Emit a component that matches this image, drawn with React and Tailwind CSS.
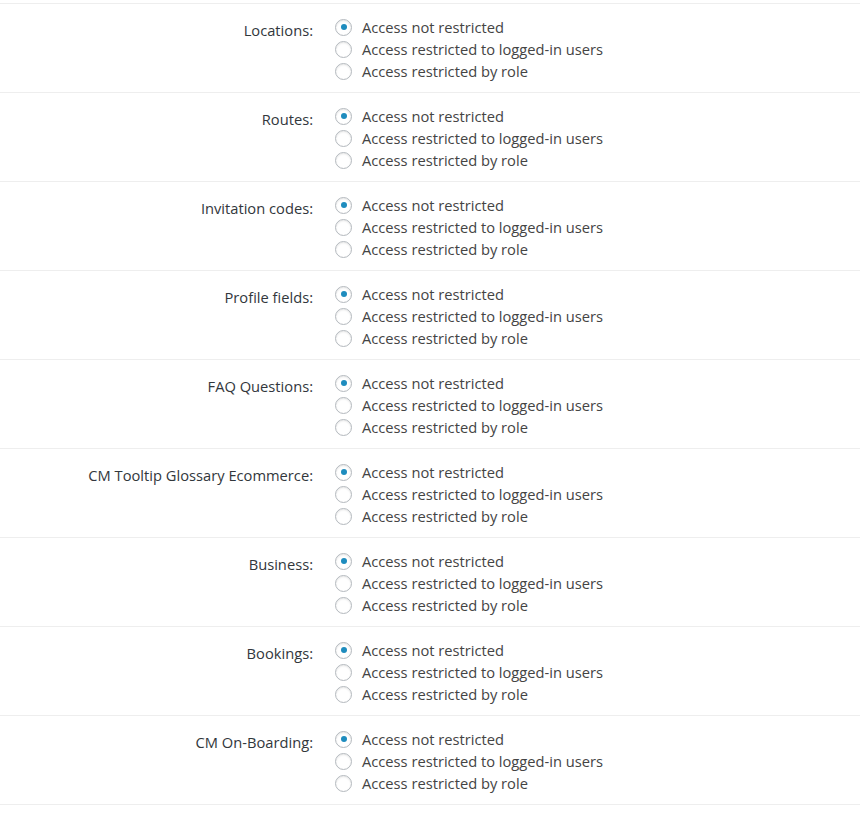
import React from "react";

const sections = [
  "Locations",
  "Routes",
  "Invitation codes",
  "Profile fields",
  "FAQ Questions",
  "CM Tooltip Glossary Ecommerce",
  "Business",
  "Bookings",
  "CM On-Boarding",
];

const options = [
  "Access not restricted",
  "Access restricted to logged-in users",
  "Access restricted by role",
];

function Radio({ checked }) {
  return (
    <span className="flex h-[17px] w-[17px] shrink-0 items-center justify-center rounded-full border border-[#b4b9be] bg-white shadow-[inset_0_1px_2px_rgba(0,0,0,0.1)]">
      {checked && <span className="h-[6px] w-[6px] rounded-full bg-[#1e8cbe]" />}
    </span>
  );
}

export default function App() {
  return (
    <div
      className="min-h-[813px] w-[860px] bg-white pt-[3px] text-[14.7px]"
      style={{ fontFamily: '"Open Sans", "Noto Sans", sans-serif' }}
    >
      {sections.map((s, i) => (
        <div
          key={s}
          className={`grid grid-cols-[313px_1fr] border-t border-[#eeeeee] pt-[12px] pb-[10px] ${i === sections.length - 1 ? "border-b" : ""}`}
        >
          <div className="pt-[3px] text-right leading-[22px] text-[#32373c]">{s}:</div>
          <div className="flex flex-col pl-[22px]">
            {options.map((o, j) => (
              <label key={o} className="flex h-[22px] items-center gap-[10px] leading-[22px] text-[#444]">
                <Radio checked={j === 0} />
                <span>{o}</span>
              </label>
            ))}
          </div>
        </div>
      ))}
    </div>
  );
}
